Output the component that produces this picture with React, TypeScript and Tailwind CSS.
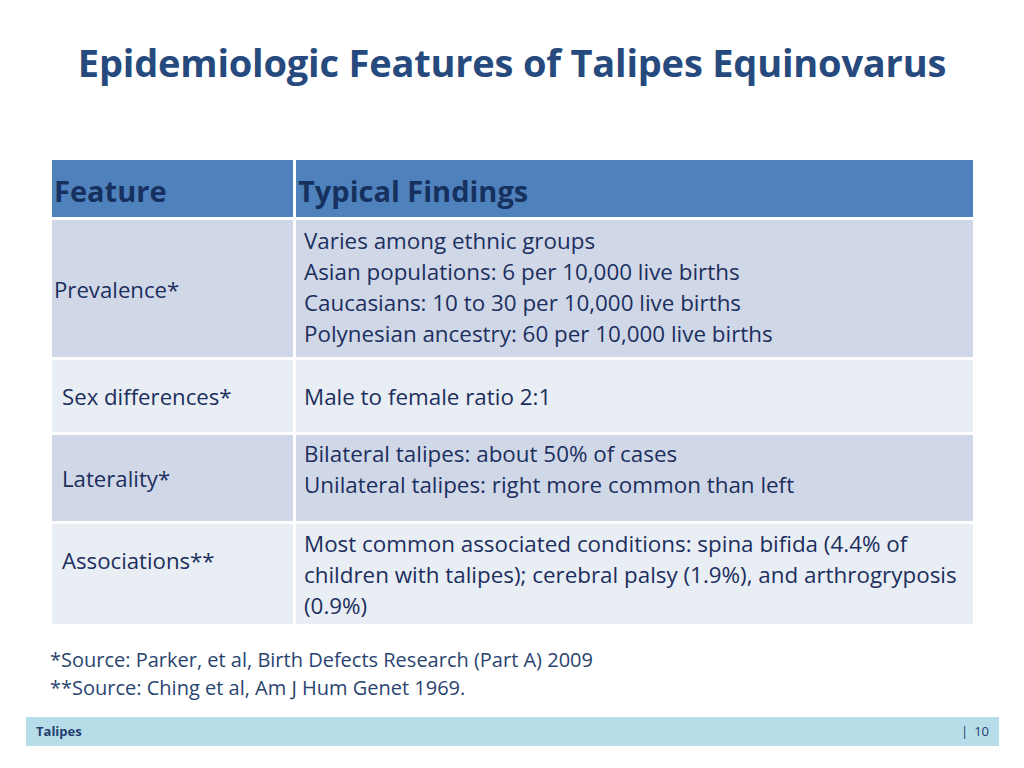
import React from "react";

const font = { fontFamily: '"Open Sans", "Noto Sans", sans-serif' };

export default function App() {
  return (
    <div className="w-[1024px] h-[768px] bg-white relative overflow-hidden text-[#1c2f5e]" style={font}>
      <div className="pt-[34px] h-[160px] flex justify-center">
        <h1 className="text-[38px] font-bold text-[#264a7d] leading-[56px] tracking-[-0.2px] whitespace-nowrap">
          Epidemiologic Features of Talipes Equinovarus
        </h1>
      </div>
      <div className="ml-[52px] w-[921px] grid grid-cols-[241px_1fr] gap-[3px] bg-white">
        <div className="h-[57px] bg-[#4f81bd] flex items-center pl-[2px] pt-[3px] text-[29px] font-bold text-[#17315f] leading-none [font-stretch:93%]">Feature</div>
        <div className="h-[57px] bg-[#4f81bd] flex items-center pl-[2px] pt-[3px] text-[29px] font-bold text-[#17315f] leading-none [font-stretch:93%]">Typical Findings</div>

        <div className="h-[137px] bg-[#d0d8e8] flex items-center pl-[2px] pt-[3px] text-[22.2px]">Prevalence*</div>
        <div className="h-[137px] bg-[#d0d8e8] pl-[8px] pt-[5px] text-[22.4px] leading-[31px]">
          <div>Varies among ethnic groups</div>
          <div>Asian populations: 6 per 10,000 live births</div>
          <div>Caucasians: 10 to 30 per 10,000 live births</div>
          <div>Polynesian ancestry: 60 per 10,000 live births</div>
        </div>

        <div className="h-[72px] bg-[#e9edf4] flex items-center pl-[10px] pt-[2px] text-[22.2px]">Sex differences*</div>
        <div className="h-[72px] bg-[#e9edf4] flex items-center pl-[8px] pt-[2px] text-[22.4px]">Male to female ratio 2:1</div>

        <div className="h-[86px] bg-[#d0d8e8] flex items-center pl-[10px] pt-[2px] text-[22.2px]">Laterality*</div>
        <div className="h-[86px] bg-[#d0d8e8] pl-[8px] pt-[3px] text-[22.4px] leading-[31px]">
          <div>Bilateral talipes: about 50% of cases</div>
          <div>Unilateral talipes: right more common than left</div>
        </div>

        <div className="h-[100px] bg-[#e9edf4] pl-[10px] pt-[21px] text-[22.2px] leading-[31px]">Associations**</div>
        <div className="h-[100px] bg-[#e9edf4] pl-[8px] pt-[4px] pr-[10px] text-[22.4px] leading-[31px]">
          Most common associated conditions: spina bifida (4.4% of children with talipes); cerebral palsy (1.9%), and arthrogryposis (0.9%)
        </div>
      </div>

      <div className="ml-[50px] mt-[22px] text-[20px] leading-[28px] text-[#2a4470]">
        <div>*Source: Parker, et al, Birth Defects Research (Part A) 2009</div>
        <div>**Source: Ching et al, Am J Hum Genet 1969.</div>
      </div>

      <div className="absolute left-[26px] top-[717px] w-[973px] h-[29px] bg-[#b7dde8] flex items-center justify-between pl-[10px] pr-[10px]">
        <span className="text-[13px] font-bold text-[#1f3f6e]">Talipes</span>
        <span className="text-[13px] text-[#1f3f6e]"><span className="mr-[6px]">|</span>10</span>
      </div>
    </div>
  );
}
